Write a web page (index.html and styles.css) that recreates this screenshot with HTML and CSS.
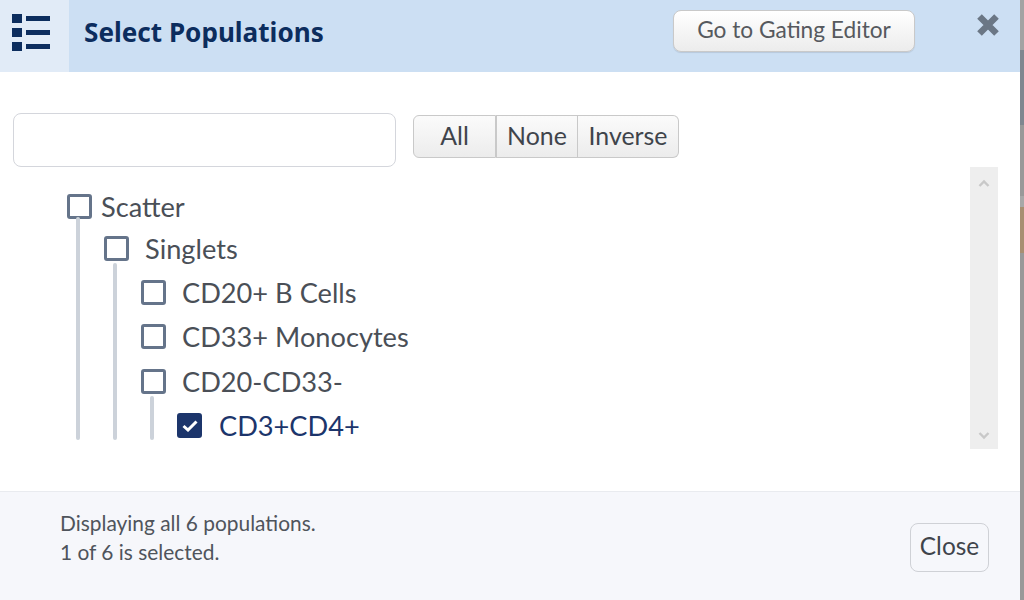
FILE: index.html
```html
<!DOCTYPE html>
<html lang="en">
<head>
<meta charset="utf-8">
<title>Select Populations</title>
<link rel="stylesheet" href="styles.css">
</head>
<body>
<section class="modal">
  <header class="head">
    <div class="menu-tile">
      <svg class="menu-icon" width="38" height="40" viewBox="0 0 38 40"><g fill="#0c2d5e"><rect x="0" y="2" width="10" height="9"/><rect x="0" y="16" width="10" height="9"/><rect x="0" y="30" width="10" height="9"/><rect x="14" y="4" width="24" height="5"/><rect x="14" y="18" width="24" height="5"/><rect x="14" y="32" width="24" height="5"/></g></svg>
    </div>
    <h1 class="title">Select Populations</h1>
    <button class="gating">Go to Gating Editor</button>
    <svg class="x" width="24" height="24" viewBox="0 0 24 24"><path d="M3.5 3.5 L20.5 20.5 M20.5 3.5 L3.5 20.5" stroke="#6b7785" stroke-width="6.5" fill="none"/></svg>
  </header>
  <main class="body">
    <div class="toolbar">
      <input class="search" type="text" aria-label="Filter">
      <div class="btn-group">
        <button class="seg seg-all">All</button>
        <button class="seg seg-none">None</button>
        <button class="seg seg-inv">Inverse</button>
      </div>
    </div>
    <div class="tree-wrap">
      <ul class="tree">
        <li class="row lvl0"><span class="box"></span><span class="lbl">Scatter</span></li>
        <li class="row lvl1"><span class="box"></span><span class="lbl lbl-wide">Singlets</span></li>
        <li class="row lvl2"><span class="box"></span><span class="lbl lbl-wide">CD20+ B Cells</span></li>
        <li class="row lvl2"><span class="box"></span><span class="lbl lbl-wide">CD33+ Monocytes</span></li>
        <li class="row lvl2"><span class="box"></span><span class="lbl lbl-wide">CD20-CD33-</span></li>
        <li class="row lvl3 on"><span class="box checked"><svg width="16" height="12" viewBox="0 0 16 12"><path d="M1.5 6 L6 10 L14.5 1.5" stroke="#fff" stroke-width="3" fill="none"/></svg></span><span class="lbl lbl-wide">CD3+CD4+</span></li>
      </ul>
      <i class="guide g0"></i><i class="guide g1"></i><i class="guide g2"></i>
      <div class="scroll">
        <svg width="12" height="8" viewBox="0 0 12 8"><path d="M1.5 7 L6 2.5 L10.5 7" stroke="#c8c8c8" stroke-width="2.4" fill="none"/></svg>
        <svg width="12" height="8" viewBox="0 0 12 8"><path d="M1.5 1 L6 5.5 L10.5 1" stroke="#c8c8c8" stroke-width="2.4" fill="none"/></svg>
      </div>
    </div>
  </main>
  <footer class="foot">
    <p class="status">Displaying all 6 populations.<br>1 of 6 is selected.</p>
    <button class="close">Close</button>
  </footer>
</section>
<div class="backdrop"></div>
</body>
</html>
```

FILE: styles.css
```css
* { box-sizing: border-box; }
html, body { margin: 0; height: 100%; overflow: hidden; }
body {
  display: flex;
  background: #999;
  font-family: Lato, "Liberation Sans", sans-serif;
  color: #4a4f57;
}
.backdrop {
  width: 4px;
  background: linear-gradient(#a3a3a3 0 50px, #7f8790 50px 125px, #999 125px 196px, #a8a8a8 196px 207px, #a88f72 207px 253px, #999 253px);
}
.modal { width: 1020px; height: 600px; display: flex; flex-direction: column; background: #fff; }
.head { height: 72px; flex: none; display: flex; background: #ccdff3; align-items: flex-start; }
.menu-tile { width: 69px; height: 72px; background: #e1ebf7; padding: 12px 0 0 12px; }
.menu-icon { display: block; }
.title { margin: 0; padding: 14px 0 0 15px; font: 700 26.1px/36px "Noto Sans", "Open Sans", sans-serif; color: #0c2d5e; flex: 1; }
.gating {
  margin: 10px 0 0;
  width: 242px; height: 42px;
  border: 1px solid #c9c9c9; border-radius: 8px;
  background: linear-gradient(#ffffff, #ececec);
  font: 400 22.7px/1 Lato, sans-serif; color: #56595e;
  box-shadow: 0 1px 1px rgba(0,0,0,.1);
  padding: 0 0 2px;
}
.x { margin: 13px 20px 0 61px; }
.body { flex: 1; padding: 41px 0 0 13px; }
.toolbar { display: flex; align-items: flex-start; gap: 17px; height: 54px; }
.search { width: 383px; height: 54px; border: 1px solid #d4d6dc; border-radius: 8px; background: #fff; }
.btn-group { display: flex; margin-top: 2px; height: 43px; }
.seg {
  height: 43px; border: 1px solid #c9c9c9; background: linear-gradient(#fbfbfb, #ececec);
  font: 400 24.9px/1 Lato, sans-serif; color: #3f444b; padding: 0 0 2px;
}
.seg-all { width: 83px; border-radius: 6px 0 0 6px; }
.seg-none { width: 82px; }
.seg-inv { width: 101px; border-left: 0; border-radius: 0 6px 6px 0; }
.tree-wrap { position: relative; height: 282px; }
.tree { list-style: none; margin: 0; padding: 18px 0 0; }
.row { display: flex; align-items: center; height: 44.5px; font-size: 27.2px; }
.lvl0 { padding-left: 54px; height: 42px; }
.lvl1 { padding-left: 91px; height: 43px; }
.lvl2 { padding-left: 128px; }
.lvl3 { padding-left: 164px; }
.box { flex: none; width: 25px; height: 25px; border: 3px solid #65748a; border-radius: 3px; background: #fff; display: flex; align-items: center; justify-content: center; }
.box.checked { background: #1c356b; border-color: #1c356b; }
.lbl { margin-left: 9px; }
.lbl-wide { margin-left: 16px; }
.lvl3 .lbl-wide { margin-left: 17px; }
.on .lbl { color: #1c356b; }
.guide { position: absolute; width: 4px; background: #ccd2da; border-radius: 2px; }
.g0 { left: 63px; top: 50px; height: 223px; }
.g1 { left: 100px; top: 96px; height: 177px; }
.g2 { left: 137px; top: 229px; height: 44px; }
.scroll { position: absolute; left: 957px; top: 0; width: 28px; height: 282px; background: #eeeeee; display: flex; flex-direction: column; justify-content: space-between; align-items: center; padding: 12px 0 9px; }
.foot { height: 109px; flex: none; background: #f6f7fb; border-top: 1px solid #e9ebef; display: flex; justify-content: space-between; padding: 16px 31px 0 60px; }
.status { margin: 0; font-size: 20.9px; line-height: 29px; color: #4f545c; }
.close { margin-top: 15px; width: 79px; height: 49px; border: 1px solid #cfd1d6; border-radius: 8px; background: #f6f7fb; font: 400 24.4px/1 Lato, sans-serif; color: #3f444b; padding: 0 0 2px; }
```
